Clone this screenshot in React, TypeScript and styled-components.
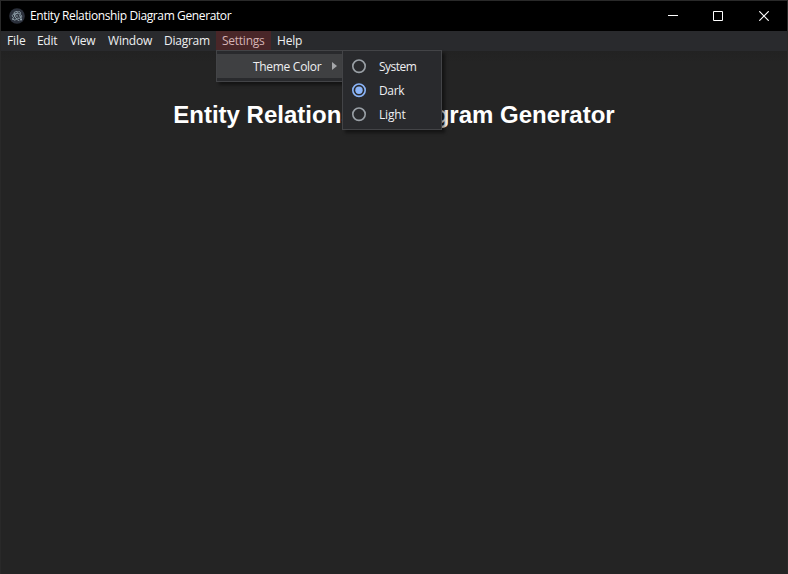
import React from "react";
import styled, { createGlobalStyle } from "styled-components";

const GlobalStyle = createGlobalStyle`
  * { box-sizing: border-box; }
  body { margin: 0; background: #242424; overflow: hidden; }
`;

const Window = styled.div`
  height: 574px;
  display: flex;
  flex-direction: column;
  background: #242424;
  border: 1px solid #292929;
  border-bottom: 0;
  color: #fff;
  font-family: "Open Sans", "Noto Sans", sans-serif;
  font-size: 12px;
`;

const TitleBar = styled.header`
  height: 30px;
  flex: none;
  display: flex;
  align-items: center;
  padding-left: 8px;
  background: #000;
`;

const Title = styled.span<{ $spacing: number }>`
  flex: 1;
  margin-left: 5px;
  line-height: 16px;
  white-space: nowrap;
  letter-spacing: ${(p) => p.$spacing}px;
`;

const WindowControls = styled.div`
  display: flex;
  height: 100%;
`;

const ControlButton = styled.button<{ $width: number }>`
  width: ${(p) => p.$width}px;
  height: 100%;
  display: flex;
  align-items: center;
  justify-content: center;
  padding: 0;
  border: 0;
  background: transparent;
  color: #fff;
`;

const MenuBar = styled.nav`
  height: 20px;
  flex: none;
  display: flex;
  background: #292a2d;
`;

const MenuEntry = styled.div<{ $width: number; $open?: boolean }>`
  position: relative;
  width: ${(p) => p.$width}px;
  height: 20px;
  padding-left: 6px;
  line-height: 20px;
  white-space: nowrap;
  color: ${(p) => (p.$open ? "#d5b3b5" : "#eeeff1")};
  background: ${(p) => (p.$open ? "#492628" : "transparent")};
`;

const Label = styled.span<{ $spacing: number }>`
  letter-spacing: ${(p) => p.$spacing}px;
`;

const Popup = styled.div<{ $left: number; $top: number; $width: number }>`
  position: absolute;
  left: ${(p) => p.$left}px;
  top: ${(p) => p.$top}px;
  width: ${(p) => p.$width}px;
  padding: 3px 0;
  border: 1px solid #434447;
  background: #292a2d;
  box-shadow: 3px 3px 3px rgba(0, 0, 0, 0.45);
  color: #eeeff1;
  z-index: 2;
`;

const SubmenuRow = styled.div`
  height: 24px;
  display: flex;
  align-items: center;
  padding: 1px 4px 0 36px;
  background: #3f4042;
  line-height: 24px;
`;

const Arrow = styled.svg`
  margin: 0 1px 1px auto;
`;

const RadioRow = styled.div`
  height: 24px;
  display: flex;
  align-items: center;
  gap: 12px;
  padding: 1px 0 0 8px;
  line-height: 24px;
`;

const Content = styled.main`
  flex: 1;
  padding-top: 50px;
  background: linear-gradient(#222 0, #242424 12px);
`;

const Heading = styled.h1`
  margin: 0;
  text-align: center;
  font: bold 24px/28px "Liberation Sans", Arial, sans-serif;
`;

const AppIcon = () => (
  <svg width="16" height="16" viewBox="0 0 16 16" fill="none">
    <circle cx="8" cy="8" r="7.8" fill="#2b303b" />
    <g stroke="#a6b8c2" strokeWidth=".75" strokeLinecap="round">
      <path d="M10.5 5.8C7.4 5.2 4 5.7 3.4 7.2C3 8.1 3.7 9.1 4.8 9.8M12.1 7C13.6 8.5 12.5 10 9.5 10.5" />
      <path d="M5.4 8.3C6.8 5.6 9.2 3.2 10.7 3.7C11.8 4.1 11.5 6.1 10.5 8.2M4.5 11.5C4.9 13 7.2 12 9 9.7" />
      <path d="M6.9 3.8C5.5 3.2 4.6 4.5 5.3 7C6 9.6 8.2 12.3 10 12.6M12.1 11.7C12.4 10.8 12.1 9.5 11.4 8.1" />
    </g>
    <g fill="#bfd0d8">
      <circle cx="8" cy="8" r=".65" />
      <circle cx="3.9" cy="10.9" r=".75" />
      <circle cx="12" cy="11.7" r=".75" />
      <circle cx="7.9" cy="3.6" r=".65" />
    </g>
  </svg>
);

const RadioMark = ({ checked }: { checked: boolean }) => (
  <svg width="16" height="16" viewBox="0 0 16 16" fill="none">
    <circle cx="8" cy="7.2" r="6.2" stroke={checked ? "#8ab4f8" : "#9aa0a6"} strokeWidth="1.6" />
    {checked && <circle cx="8" cy="7.2" r="3.7" fill="#8ab4f8" />}
  </svg>
);

const entries = [
  { label: "File", width: 30, spacing: -0.1 },
  { label: "Edit", width: 33, spacing: -0.3 },
  { label: "View", width: 38, spacing: -0.2 },
  { label: "Window", width: 56, spacing: -0.2 },
  { label: "Diagram", width: 58, spacing: -0.25 },
  { label: "Settings", width: 55, spacing: -0.25 },
  { label: "Help", width: 37, spacing: -0.2 },
];

const themes = [
  { label: "System", spacing: -0.5 },
  { label: "Dark", spacing: -0.35 },
  { label: "Light", spacing: -0.15 },
];

export default function App() {
  return (
    <>
      <GlobalStyle />
      <Window>
        <TitleBar>
          <AppIcon />
          <Title $spacing={-0.38}>Entity Relationship Diagram Generator</Title>
          <WindowControls>
            <ControlButton $width={45} aria-label="Minimize">
              <svg width="10" height="10" stroke="currentColor"><path d="M0 4.5H10" /></svg>
            </ControlButton>
            <ControlButton $width={46} aria-label="Maximize">
              <svg width="10" height="10" fill="none" stroke="currentColor"><path d="M.5 -.5h9v9h-9z" overflow="visible" transform="translate(0 1)" /></svg>
            </ControlButton>
            <ControlButton $width={46} aria-label="Close">
              <svg width="10" height="10" stroke="currentColor" strokeWidth="1.2"><path d="M.3.3l9.4 9.4M9.7.3L.3 9.7" /></svg>
            </ControlButton>
          </WindowControls>
        </TitleBar>
        <MenuBar>
          {entries.map(({ label, width, spacing }) => (
            <MenuEntry key={label} $width={width} $open={label === "Settings"}>
              <Label $spacing={spacing}>{label}</Label>
              {label === "Settings" && (
                <>
                  <Popup $left={0} $top={19} $width={128}>
                    <SubmenuRow>
                      <Label $spacing={-0.3}>Theme Color</Label>
                      <Arrow width="6" height="8" fill="#a5a7aa"><path d="M0 0l5 4-5 4z" /></Arrow>
                    </SubmenuRow>
                  </Popup>
                  <Popup $left={126} $top={19} $width={100}>
                    {themes.map((theme) => (
                      <RadioRow key={theme.label}>
                        <RadioMark checked={theme.label === "Dark"} />
                        <Label $spacing={theme.spacing}>{theme.label}</Label>
                      </RadioRow>
                    ))}
                  </Popup>
                </>
              )}
            </MenuEntry>
          ))}
        </MenuBar>
        <Content>
          <Heading>Entity Relationship Diagram Generator</Heading>
        </Content>
      </Window>
    </>
  );
}
